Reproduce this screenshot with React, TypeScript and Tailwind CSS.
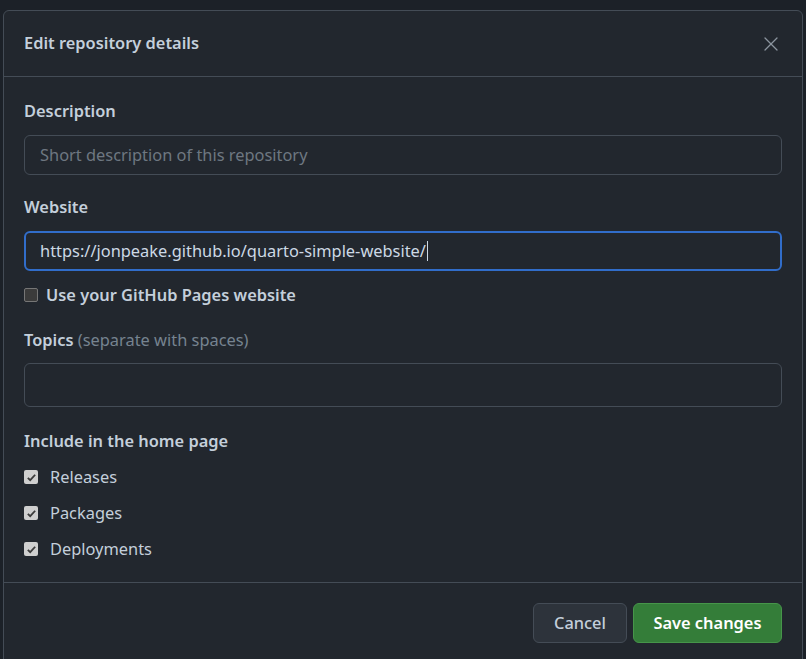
import { X } from "lucide-react";

function Check({ checked }: { checked: boolean }) {
  if (!checked) {
    return (
      <span className="h-[14px] w-[14px] shrink-0 rounded-[2px] border border-[#767676] bg-[#3b3b3b]" />
    );
  }
  return (
    <span className="flex h-[14px] w-[14px] shrink-0 items-center justify-center rounded-[2px] bg-[#cfcfcf]">
      <svg viewBox="0 0 12 12" className="h-[11px] w-[11px]">
        <path d="M2 6.3l2.6 2.6L10 3" fill="none" stroke="#3b3b3b" strokeWidth="2" />
      </svg>
    </span>
  );
}

function Label({ children }: { children: React.ReactNode }) {
  return <div className="h-6 text-[16.4px] font-semibold leading-6 text-[#c4cfdb]">{children}</div>;
}

export default function App() {
  const home = ["Releases", "Packages", "Deployments"];

  return (
    <div
      className="h-[659px] w-[806px] overflow-hidden bg-[#1c2128] px-[3px] pt-[10px]"
      style={{ fontFamily: '"Noto Sans", "Open Sans", sans-serif' }}
    >
      <div className="h-[700px] rounded-t-[6px] border border-[#444c56] bg-[#22272e]">
        {/* Header */}
        <div className="flex h-[66px] items-center justify-between border-b border-[#444c56] pl-5 pr-[19px]">
          <h2 className="text-[16.4px] font-semibold text-[#c4cfdb]">Edit repository details</h2>
          <X className="h-6 w-6 text-[#8b949e]" strokeWidth={1.3} />
        </div>

        {/* Body */}
        <div className="border-b border-[#444c56] px-5 pb-[21px] pt-[22px]">
          <Label>Description</Label>
          <div className="mt-3 flex h-10 items-center rounded-md border border-[#444c56] bg-[#22272e] px-[15px] text-[16.4px] text-[#6e7781]">
            Short description of this repository
          </div>

          <div className="mt-5">
            <Label>Website</Label>
          </div>
          <div className="mt-3 flex h-10 items-center rounded-md border-2 border-[#316dca] bg-[#22272e] px-[14px] text-[16.4px] text-[#cdd9e5]">
            https://jonpeake.github.io/quarto-simple-website/
            <span className="ml-px inline-block h-5 w-px bg-[#cdd9e5]" />
          </div>

          <div className="mt-3 flex h-6 items-center gap-2">
            <Check checked={false} />
            <span className="text-[16.4px] font-semibold text-[#c4cfdb]">Use your GitHub Pages website</span>
          </div>

          <div className="mt-[21px] h-6 text-[16.4px] leading-6">
            <span className="font-semibold text-[#c4cfdb]">Topics</span>{" "}
            <span className="text-[#768390]">(separate with spaces)</span>
          </div>
          <div className="mt-[11px] h-11 rounded-md border border-[#444c56] bg-[#22272e]" />

          <div className="mt-[22px]">
            <Label>Include in the home page</Label>
          </div>
          <div className="mt-3 flex flex-col gap-3">
            {home.map((h) => (
              <div key={h} className="flex h-6 items-center gap-3">
                <Check checked />
                <span className="text-[16.4px] text-[#c4cfdb]">{h}</span>
              </div>
            ))}
          </div>
        </div>

        {/* Footer */}
        <div className="flex justify-end gap-[6px] px-5 pt-5">
          <button className="h-10 w-[94px] rounded-md border border-[#444c56] bg-[#2d333b] text-[16.4px] font-medium text-[#c4cfdb]">
            Cancel
          </button>
          <button className="h-10 w-[149px] rounded-md border border-[#46954a] bg-[#347d39] text-[16.4px] font-semibold text-white">
            Save changes
          </button>
        </div>
      </div>
    </div>
  );
}
